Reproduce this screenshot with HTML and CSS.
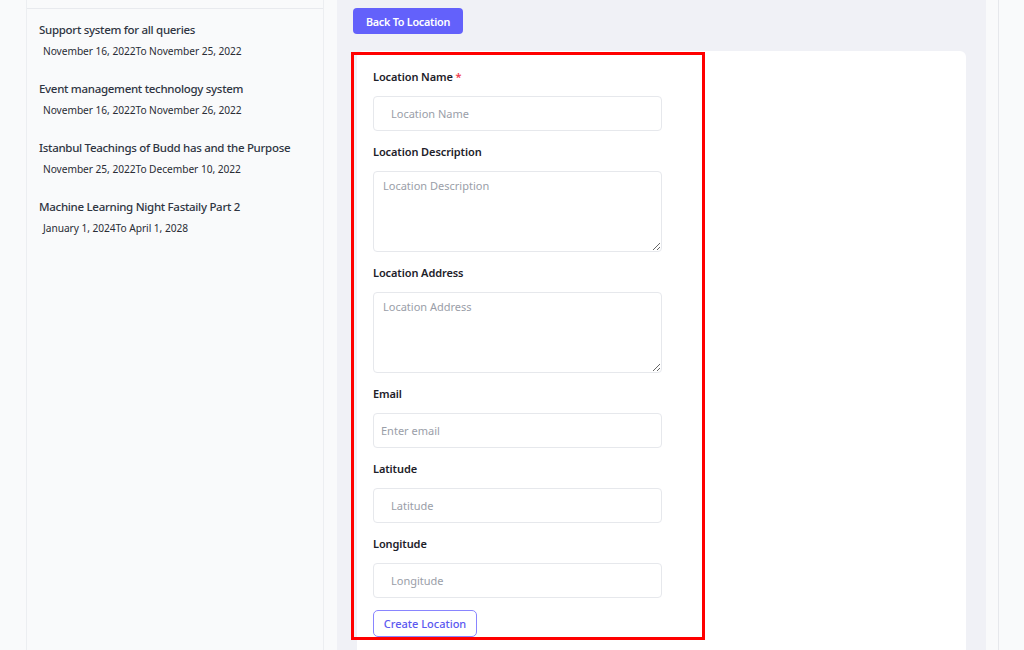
FILE: index.html
```html
<!DOCTYPE html>
<html lang="en">
<head>
<meta charset="utf-8">
<title>Create Location</title>
<link rel="stylesheet" href="styles.css">
</head>
<body>
<div class="layout">
  <aside class="sidebar">
    <div class="sidebar-top"></div>
    <ul class="events">
      <li class="event">
        <div class="event-title">Support system for all queries</div>
        <div class="event-date">November 16, 2022To November 25, 2022</div>
      </li>
      <li class="event">
        <div class="event-title">Event management technology system</div>
        <div class="event-date">November 16, 2022To November 26, 2022</div>
      </li>
      <li class="event">
        <div class="event-title">Istanbul Teachings of Budd has and the Purpose</div>
        <div class="event-date">November 25, 2022To December 10, 2022</div>
      </li>
      <li class="event">
        <div class="event-title">Machine Learning Night Fastaily Part 2</div>
        <div class="event-date">January 1, 2024To April 1, 2028</div>
      </li>
    </ul>
  </aside>
  <div class="spacer"></div>
  <main class="main">
    <button class="btn-back" type="button">Back To Location</button>
    <section class="card">
      <div class="highlight"></div>
      <form class="form">
        <div class="group">
          <label class="label">Location Name <span class="req">*</span></label>
          <input class="input pad-wide" type="text" placeholder="Location Name">
        </div>
        <div class="group">
          <label class="label">Location Description</label>
          <textarea class="textarea" placeholder="Location Description"></textarea>
        </div>
        <div class="group">
          <label class="label">Location Address</label>
          <textarea class="textarea" placeholder="Location Address"></textarea>
        </div>
        <div class="group">
          <label class="label">Email</label>
          <input class="input pad-narrow" type="email" placeholder="Enter email">
        </div>
        <div class="group">
          <label class="label">Latitude</label>
          <input class="input pad-wide" type="text" placeholder="Latitude">
        </div>
        <div class="group">
          <label class="label">Longitude</label>
          <input class="input pad-wide" type="text" placeholder="Longitude">
        </div>
        <button class="btn-create" type="button">Create Location</button>
      </form>
    </section>
  </main>
  <div class="rail"></div>
  <div class="rest"></div>
</div>
</body>
</html>
```
FILE: styles.css
```css
* { box-sizing: border-box; }
html, body { margin: 0; padding: 0; }
body {
  background: #f9fafb;
  font-family: "Noto Sans", "Open Sans", "Liberation Sans", sans-serif;
  color: #1f2430;
  height: 650px;
  overflow: hidden;
}
.layout {
  display: flex;
  height: 650px;
}
.sidebar {
  margin-left: 26px;
  width: 298px;
  flex: none;
  background: #f9fafb;
  border-left: 1px solid #eceef1;
  border-right: 1px solid #eceef1;
}
.sidebar-top {
  height: 9px;
  border-bottom: 1px solid #e8eaee;
}
.events {
  list-style: none;
  margin: 0;
  padding: 12px 8px 0 12px;
}
.event {
  margin-bottom: 20px;
}
.event-title {
  font-size: 11.5px;
  line-height: 18px;
  font-weight: 500;
  letter-spacing: -0.3px;
  color: #2f3542;
  white-space: nowrap;
}
.event-date {
  margin-top: 3px;
  padding-left: 4px;
  font-size: 10.2px;
  line-height: 18px;
  letter-spacing: -0.05px;
  color: #2a2d35;
  white-space: nowrap;
}
.spacer {
  width: 13px;
  flex: none;
}
.main {
  width: 649px;
  flex: none;
  background: #f0f1f6;
  padding: 8px 0 0 16px;
}
.btn-back {
  display: block;
  height: 26px;
  width: 110px;
  border: none;
  border-radius: 4px;
  background: #6361fb;
  color: #ffffff;
  font-family: inherit;
  font-size: 10.8px;
  font-weight: 600;
  letter-spacing: -0.25px;
  padding: 0;
  cursor: pointer;
}
.card {
  position: relative;
  margin: 17px 0 0 4px;
  width: 609px;
  height: 620px;
  background: #ffffff;
  border-radius: 6px 6px 0 0;
  padding: 17px 0 0 16px;
}
.highlight {
  position: absolute;
  left: -6px;
  top: 1px;
  width: 354px;
  height: 588px;
  border: 3px solid #ff0000;
  pointer-events: none;
}
.form {
  width: 289px;
}
.group {
  margin-bottom: 12px;
}
.label {
  display: block;
  font-size: 11px;
  line-height: 18px;
  font-weight: 600;
  letter-spacing: -0.1px;
  color: #1d2129;
  margin-bottom: 10px;
}
.req {
  color: #f0394a;
}
.input, .textarea {
  display: block;
  width: 289px;
  border: 1px solid #e6e8ec;
  border-radius: 4px;
  background: #ffffff;
  font-family: inherit;
  font-size: 11px;
  color: #333;
  outline: none;
}
.input {
  height: 35px;
}
.pad-wide { padding: 0 12px 0 17px; }
.pad-narrow { padding: 0 8px 0 7px; }
.textarea {
  height: 81px;
  padding: 5px 9px;
  line-height: 18px;
  resize: vertical;
}
.input::placeholder, .textarea::placeholder {
  color: #9a9ea8;
}
.btn-create {
  display: block;
  height: 27px;
  width: 104px;
  border: 1px solid #8985ff;
  border-radius: 5px;
  background: #ffffff;
  color: #5b58f0;
  font-family: inherit;
  font-size: 11px;
  font-weight: 500;
  padding: 0;
}
.rail {
  width: 13px;
  flex: none;
  background: #f9fafb;
  border-right: 1px solid #e6e8ec;
}
.rest {
  flex: 1;
  background: #f9fafb;
}
```
